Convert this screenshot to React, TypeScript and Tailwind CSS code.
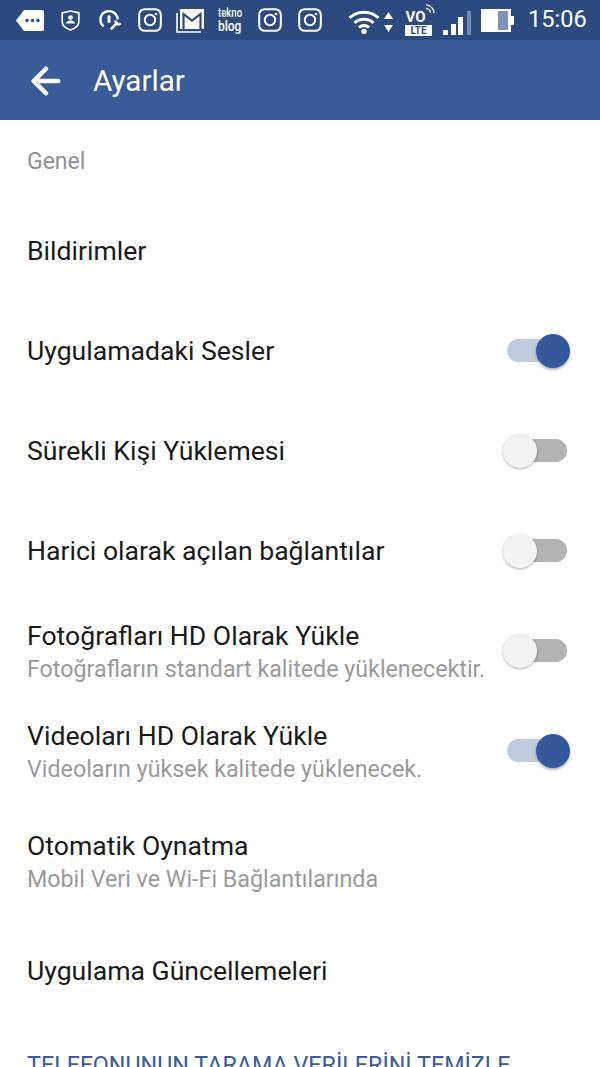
import { ArrowLeft } from "lucide-react";

function Instagram({ className }: { className: string }) {
  return (
    <svg width="24" height="24" viewBox="0 0 24 24" className={className} fill="none" stroke="#fff">
      <rect x="1.2" y="1.2" width="21.6" height="21.6" rx="5.5" strokeWidth="2" />
      <circle cx="12" cy="12" r="5.2" strokeWidth="2" />
      <circle cx="18" cy="6" r="1.3" fill="#fff" stroke="none" />
    </svg>
  );
}

function StatusBar() {
  return (
    <div className="flex h-10 items-center bg-[#2c4a80] text-white">
      {/* notification tag */}
      <svg width="28" height="21" viewBox="0 0 28 21" className="ml-4 shrink-0">
        <path d="M8 0H26a2 2 0 0 1 2 2V19a2 2 0 0 1-2 2H8L0 10.5Z" fill="#fff" />
        <circle cx="11" cy="10.5" r="1.7" fill="#2c4a80" />
        <circle cx="16.5" cy="10.5" r="1.7" fill="#2c4a80" />
        <circle cx="22" cy="10.5" r="1.7" fill="#2c4a80" />
      </svg>
      {/* shield */}
      <svg width="19" height="21" viewBox="0 0 19 21" className="ml-[17px] shrink-0">
        <path d="M1.2 2.8 9.5 1l8.3 1.8v9.2c0 3.6-3.4 6.2-8.3 8-4.9-1.8-8.3-4.4-8.3-8Z" fill="none" stroke="#fff" strokeWidth="1.7" />
        <circle cx="9.5" cy="7.6" r="2.4" fill="#fff" />
        <path d="M4.8 13.4c.5-2 2.4-3 4.7-3s4.2 1 4.7 3Z" fill="#fff" />
      </svg>
      {/* gauge with wrench */}
      <svg width="23" height="20" viewBox="0 0 23 20" className="ml-[19px] shrink-0" fill="none" stroke="#fff">
        <path d="M4.6 16.4A8.6 8.6 0 1 1 18.6 9.5" strokeWidth="2.4" />
        <path d="M10 6.5v5" strokeWidth="3" strokeLinecap="round" />
        <path d="M12.5 18.6 18 13" strokeWidth="2.6" strokeLinecap="round" />
        <path d="M16.6 10.6a3 3 0 0 0 5.2 2.6" strokeWidth="2.2" />
      </svg>
      <Instagram className="ml-[16px] shrink-0" />
      {/* gmail stack */}
      <svg width="28" height="25" viewBox="0 0 28 25" className="ml-[14px] shrink-0">
        <path d="M1 5V24H25" fill="none" stroke="#fff" strokeWidth="1.6" />
        <rect x="4" y="1" width="24" height="20" fill="#fff" />
        <path d="M7.5 21V6l8.5 6.5L24.5 6v15" fill="none" stroke="#2c4a80" strokeWidth="2.2" />
      </svg>
      <div className="ml-[14px] flex w-6 shrink-0 origin-left scale-x-[0.8] flex-col items-start font-['Roboto',sans-serif] font-medium">
        <span className="text-[12px] leading-[11px]">tekno</span>
        <span className="text-[15px] leading-[14px]">blog</span>
      </div>
      <Instagram className="ml-[16px] shrink-0" />
      <Instagram className="ml-[16px] shrink-0" />
      {/* wifi */}
      <svg width="32" height="26" viewBox="0 0 32 26" className="ml-[26px] mt-[2px] shrink-0" fill="none" stroke="#fff" strokeWidth="3">
        <path d="M1.5 10a21 21 0 0 1 29 0" />
        <path d="M6.5 15a14 14 0 0 1 19 0" />
        <path d="M11 19.5a7.5 7.5 0 0 1 10 0" />
        <circle cx="16" cy="23.5" r="2.7" fill="#fff" stroke="none" />
      </svg>
      <svg width="9" height="20" viewBox="0 0 9 20" className="ml-[4px] mt-[3px] shrink-0">
        <path d="M4.5 0 9 7H0Z M0 13H9L4.5 20Z" fill="#fff" />
      </svg>
      {/* VoLTE */}
      <div className="relative ml-3 flex h-[32px] w-[27px] shrink-0 flex-col items-center justify-end">
        <span className="-ml-[6px] font-['Roboto',sans-serif] text-[15px] font-bold leading-[14px]">VO</span>
        <span className="mt-[1px] w-full bg-white text-center font-['Roboto',sans-serif] text-[10px] font-bold leading-[11px] text-[#2c4a80]">
          LTE
        </span>
        <svg width="10" height="11" viewBox="0 0 10 11" className="absolute -right-[3px] top-0" fill="none" stroke="#fff" strokeWidth="1.3">
          <path d="M1 1a8 8 0 0 1 8 8" />
          <path d="M1 4.5a4.5 4.5 0 0 1 4.5 4.5" />
        </svg>
      </div>
      {/* signal */}
      <svg width="28" height="24" viewBox="0 0 28 24" className="ml-[11px] mt-[6px] shrink-0">
        <rect x="0" y="19" width="5" height="5" fill="#fff" />
        <rect x="8" y="13" width="5" height="11" fill="#fff" />
        <rect x="15" y="6" width="5" height="18" fill="#fff" />
        <rect x="24" y="0" width="4" height="24" fill="#fff" opacity="0.35" />
      </svg>
      {/* battery */}
      <svg width="33" height="23" viewBox="0 0 33 23" className="ml-[10px] shrink-0">
        <rect x="0" y="0" width="30" height="23" fill="#fff" />
        <rect x="17" y="2" width="10" height="19" fill="#8292b3" />
        <rect x="30" y="7" width="3" height="9" fill="#fff" />
      </svg>
      <span className="ml-[14px] font-['Roboto',sans-serif] text-[23.6px] leading-none">15:06</span>
    </div>
  );
}

function Toggle({ on }: { on: boolean }) {
  return (
    <div className="relative h-[34px] w-[67px] shrink-0">
      <div className={`absolute left-[4px] top-[5px] h-[23px] w-[60px] rounded-full ${on ? "bg-[#bfcce0]" : "bg-[#b3b3b3]"}`} />
      <div
        className={
          on
            ? "absolute right-0 top-0 h-[34px] w-[34px] rounded-full bg-[#35589a] shadow-[0_2px_3px_rgba(0,0,0,0.3)]"
            : "absolute left-0 top-0 h-[34px] w-[34px] rounded-full bg-[#f2f2f2] shadow-[0_1px_3px_rgba(0,0,0,0.3)]"
        }
      />
    </div>
  );
}

function Row({ title, sub, toggle, className }: { title: string; sub?: string; toggle?: "on" | "off"; className: string }) {
  return (
    <div className={`flex items-center justify-between pl-[27px] pr-[30px] ${className}`}>
      <div className={sub ? "flex flex-col pt-[2px]" : "flex flex-col"}>
        <span className="text-[26.6px] leading-[34px] text-[#1a1a1a]">{title}</span>
        {sub && <span className="whitespace-nowrap text-[23.25px] leading-[33px] text-[#9a9a9a]">{sub}</span>}
      </div>
      {toggle && <Toggle on={toggle === "on"} />}
    </div>
  );
}

export default function App() {
  return (
    <div className="h-[1067px] w-[600px] overflow-hidden bg-white font-['Roboto',sans-serif]">
      <StatusBar />
      <header className="flex h-20 items-center bg-[#3a5a98] pl-[25px] pt-[2px] text-white">
        <ArrowLeft size={42} strokeWidth={2.6} />
        <span className="ml-[26px] text-[29.6px]">Ayarlar</span>
      </header>
      <div className="flex h-[81px] items-center pl-[27px] pt-[3px] text-[23px] text-[#8f8f8f]">Genel</div>
      <Row title="Bildirimler" className="h-[100px]" />
      <Row title="Uygulamadaki Sesler" toggle="on" className="h-[100px]" />
      <Row title="Sürekli Kişi Yüklemesi" toggle="off" className="h-[100px]" />
      <Row title="Harici olarak açılan bağlantılar" toggle="off" className="h-[100px]" />
      <Row title="Fotoğrafları HD Olarak Yükle" sub="Fotoğrafların standart kalitede yüklenecektir." toggle="off" className="h-[100px]" />
      <Row title="Videoları HD Olarak Yükle" sub="Videoların yüksek kalitede yüklenecek." toggle="on" className="h-[100px]" />
      <Row title="Otomatik Oynatma" sub="Mobil Veri ve Wi-Fi Bağlantılarında" className="h-[120px]" />
      <Row title="Uygulama Güncellemeleri" className="h-[100px]" />
      <div className="whitespace-nowrap pl-[27px] pt-[30px] text-[23.3px] leading-[28px] text-[#3a5a98]">
        TELEFONUNUN TARAMA VERİLERİNİ TEMİZLE
      </div>
    </div>
  );
}
